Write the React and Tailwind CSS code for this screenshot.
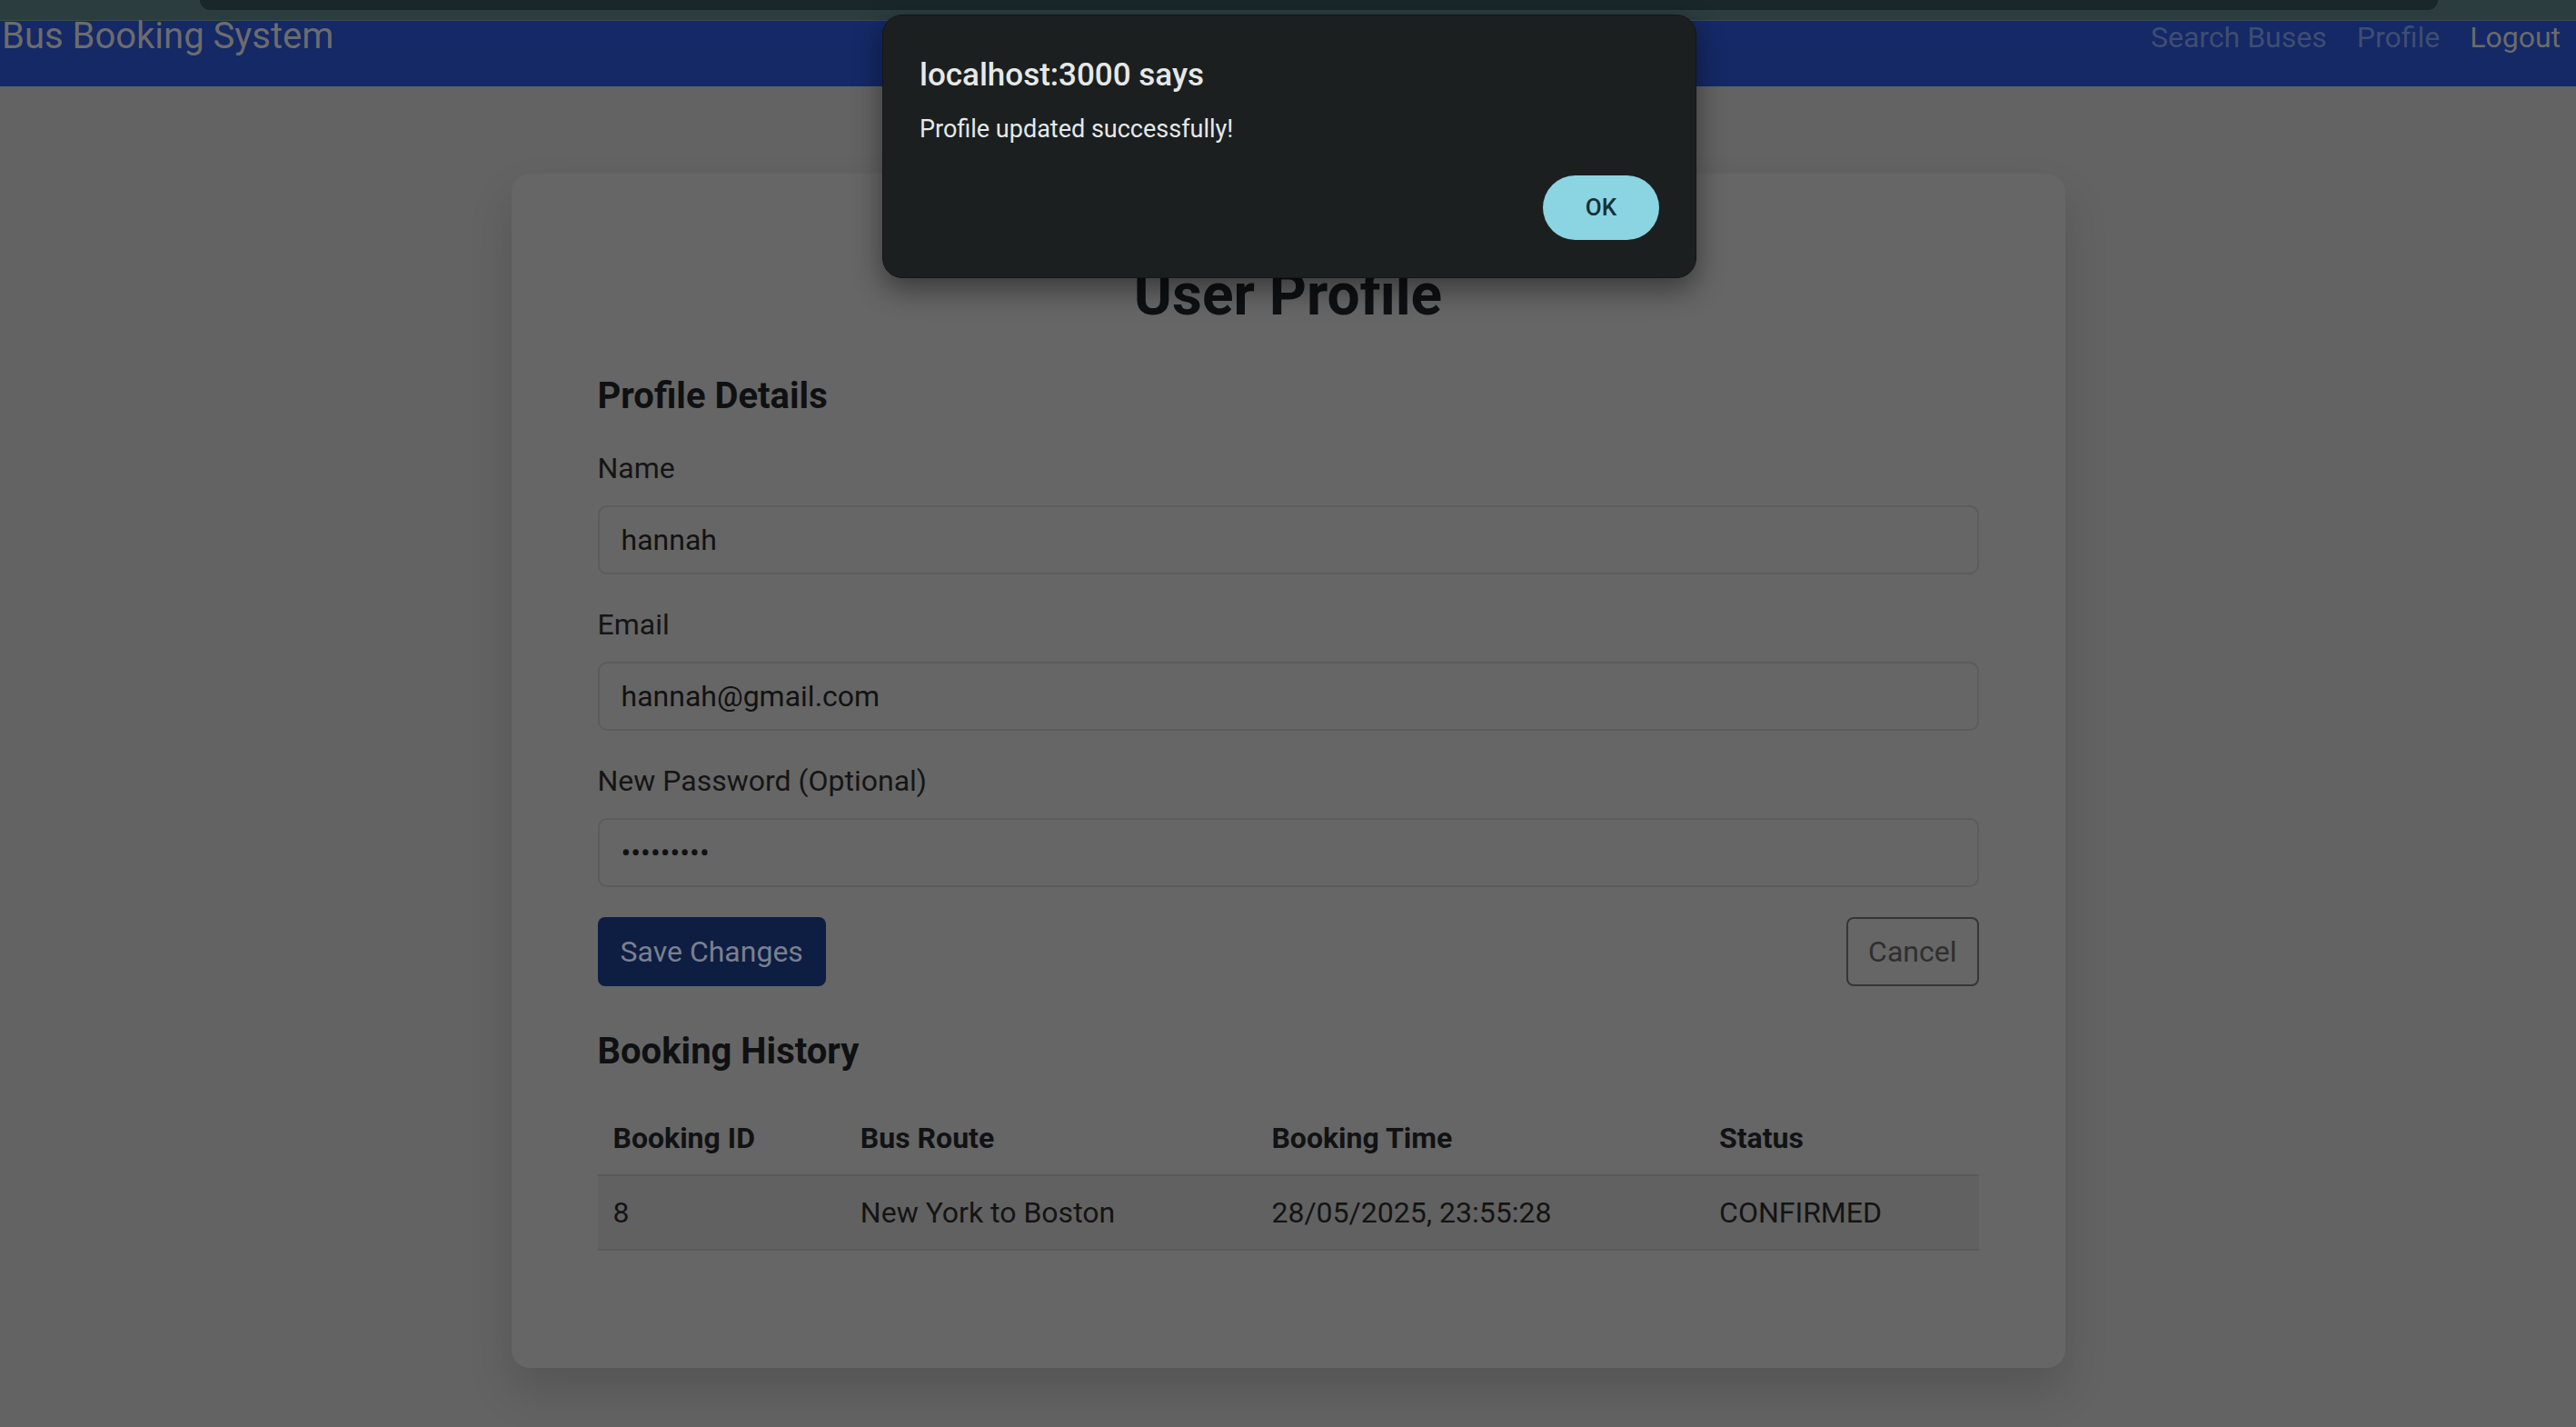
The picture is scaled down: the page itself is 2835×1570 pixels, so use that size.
import React from 'react';

const font = { fontFamily: 'Roboto, "Liberation Sans", sans-serif' };

const Field = ({ label, type = 'text', value }) => (
  <div className="mt-[37px]">
    <label className="block text-[32px] leading-[36px] text-[#151515]">{label}</label>
    <input
      type={type}
      defaultValue={value}
      readOnly
      className="mt-[23px] block w-full h-[76px] px-[24px] rounded-[10px] border-2 border-[#5c5c5c] bg-[#666666] text-[32px] leading-[36px] text-[#121212] outline-none"
    />
  </div>
);

const AlertDialog = () => (
  <div className="absolute left-[971px] top-[16px] w-[896px] h-[290px] rounded-[22px] bg-[#1b1f1f] border border-[#141717] shadow-[0_12px_32px_rgba(0,0,0,0.45)] pt-[46px] px-[40px] pb-[41px] flex flex-col">
    <p className="text-[35px] leading-[40px] font-medium text-[#e6e8e8]">localhost:3000 says</p>
    <p className="mt-[23px] text-[27px] leading-[32px] text-[#e6e8e8]">Profile updated successfully!</p>
    <div className="mt-auto flex justify-end">
      <button className="w-[128px] h-[71px] rounded-full bg-[#8bd4e2] text-[26px] font-medium text-[#163038]">OK</button>
    </div>
  </div>
);

export default function App() {
  const headers = [
    { label: 'Booking ID', w: 'w-[272px]' },
    { label: 'Bus Route', w: 'w-[452px]' },
    { label: 'Booking Time', w: 'w-[492px]' },
    { label: 'Status', w: 'w-[302px]' },
  ];
  const row = ['8', 'New York to Boston', '28/05/2025, 23:55:28', 'CONFIRMED'];

  return (
    <div className="relative min-h-[1570px] bg-[#636363] overflow-hidden" style={font}>
      {/* browser strip */}
      <div className="h-[23px] bg-[#2c3d3f] border-b border-[#3a4b4c]">
        <div className="h-[11px] ml-[220px] mr-[152px] bg-[#19272a] rounded-b-[12px]" />
      </div>

      <nav className="h-[72px] bg-[#142966] flex items-start justify-between pl-[2px] pr-[17px] pt-[2px]">
        <span className="text-[40px] leading-[30px] text-[#6c6c6c]">Bus Booking System</span>
        <div className="flex items-start gap-[33px] text-[32px] leading-[30px] pt-[1px]">
          <a className="text-[#3f4d72]">Search Buses</a>
          <a className="text-[#3f4d72]">Profile</a>
          <a className="text-[#6b6b6b]">Logout</a>
        </div>
      </nav>

      <main className="pt-[96px] pb-[64px]">
        <div className="mx-auto w-[1710px] rounded-[20px] bg-[#666666] shadow-[0_26px_50px_rgba(0,0,0,0.14)] pt-[98px] pb-[97px] px-[95px]">
          <h2 className="text-center text-[64px] leading-[72px] font-bold text-[#0f1012]">User Profile</h2>

          <h3 className="mt-[51px] text-[40px] leading-[48px] font-bold text-[#0f1012]">Profile Details</h3>
          <Field label="Name" value="hannah" />
          <Field label="Email" value="hannah@gmail.com" />
          <Field label="New Password (Optional)" type="password" value="123456789" />

          <div className="mt-[33px] flex justify-between">
            <button className="h-[76px] px-[25px] rounded-[8px] bg-[#0e1d42] text-[32px] text-[#7a8090]">Save Changes</button>
            <button className="h-[76px] px-[22px] rounded-[8px] border-2 border-[#363636] text-[32px] text-[#2f2f2f]">Cancel</button>
          </div>

          <h3 className="mt-[48px] text-[40px] leading-[48px] font-bold text-[#0f1012]">Booking History</h3>
          <table className="mt-[31px] mb-[32px] w-full border-collapse text-[32px] leading-[36px]">
            <thead>
              <tr className="border-b-2 border-[#5a5a5a]">
                {headers.map((h) => (
                  <th key={h.label} className={`${h.w} text-left font-bold px-[17px] py-[22px] text-[#111214]`}>{h.label}</th>
                ))}
              </tr>
            </thead>
            <tbody>
              <tr className="bg-[#616161] border-b-2 border-[#5a5a5a]">
                {row.map((c) => (
                  <td key={c} className="px-[17px] py-[22px] text-[#141414]">{c}</td>
                ))}
              </tr>
            </tbody>
          </table>
        </div>
      </main>

      <AlertDialog />
    </div>
  );
}
